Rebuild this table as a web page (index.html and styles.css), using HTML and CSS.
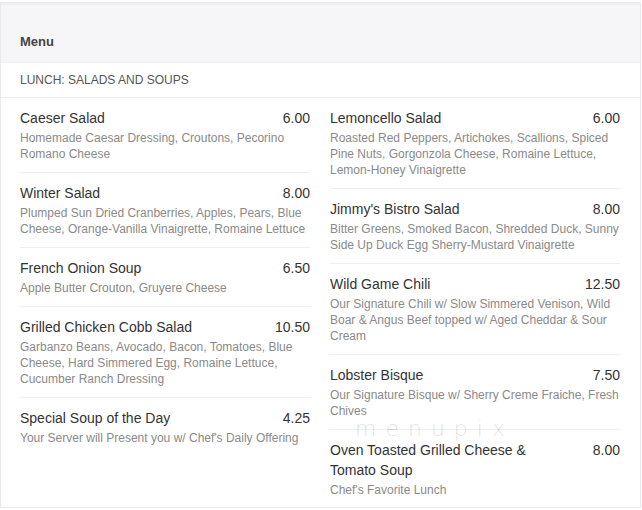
FILE: index.html
```html
<!DOCTYPE html>
<html>
<head>
<meta charset="utf-8">
<link rel="stylesheet" href="styles.css">
</head>
<body>
<div class="card">
  <div class="card-header">Menu</div>
  <div class="section-title">LUNCH: SALADS AND SOUPS</div>
  <div class="columns">
    <div class="col">
      <div class="item">
        <div class="item-head"><span>Caeser Salad</span><span class="price">6.00</span></div>
        <div class="desc">Homemade Caesar Dressing, Croutons, Pecorino Romano Cheese</div>
      </div>
      <div class="item">
        <div class="item-head"><span>Winter Salad</span><span class="price">8.00</span></div>
        <div class="desc">Plumped Sun Dried Cranberries, Apples, Pears, Blue Cheese, Orange-Vanilla Vinaigrette, Romaine Lettuce</div>
      </div>
      <div class="item">
        <div class="item-head"><span>French Onion Soup</span><span class="price">6.50</span></div>
        <div class="desc">Apple Butter Crouton, Gruyere Cheese</div>
      </div>
      <div class="item">
        <div class="item-head"><span>Grilled Chicken Cobb Salad</span><span class="price">10.50</span></div>
        <div class="desc">Garbanzo Beans, Avocado, Bacon, Tomatoes, Blue Cheese, Hard Simmered Egg, Romaine Lettuce, Cucumber Ranch Dressing</div>
      </div>
      <div class="item last">
        <div class="item-head"><span>Special Soup of the Day</span><span class="price">4.25</span></div>
        <div class="desc">Your Server will Present you w/ Chef's Daily Offering</div>
      </div>
    </div>
    <div class="col">
      <div class="item">
        <div class="item-head"><span>Lemoncello Salad</span><span class="price">6.00</span></div>
        <div class="desc">Roasted Red Peppers, Artichokes, Scallions, Spiced Pine Nuts, Gorgonzola Cheese, Romaine Lettuce, Lemon-Honey Vinaigrette</div>
      </div>
      <div class="item">
        <div class="item-head"><span>Jimmy's Bistro Salad</span><span class="price">8.00</span></div>
        <div class="desc">Bitter Greens, Smoked Bacon, Shredded Duck, Sunny Side Up Duck Egg Sherry-Mustard Vinaigrette</div>
      </div>
      <div class="item">
        <div class="item-head"><span>Wild Game Chili</span><span class="price">12.50</span></div>
        <div class="desc">Our Signature Chili w/ Slow Simmered Venison, Wild Boar &amp; Angus Beef topped w/ Aged Cheddar &amp; Sour Cream</div>
      </div>
      <div class="item">
        <div class="item-head"><span>Lobster Bisque</span><span class="price">7.50</span></div>
        <div class="desc">Our Signature Bisque w/ Sherry Creme Fraiche, Fresh Chives</div>
      </div>
      <div class="item last">
        <div class="item-head"><span class="name-wrap">Oven Toasted Grilled Cheese &amp; Tomato Soup</span><span class="price">8.00</span></div>
        <div class="desc">Chef's Favorite Lunch</div>
      </div>
    </div>
  </div>
  <div class="watermark">menupix</div>
</div>
</body>
</html>
```

FILE: styles.css
```css
html, body {
  margin: 0;
  padding: 0;
  background: #ffffff;
}

body {
  font-family: "Liberation Sans", Arial, sans-serif;
  color: #333;
}

.card {
  position: relative;
  margin-top: 2px;
  width: 639px;
  height: 504px;
  border: 1px solid #e9e9ef;
  box-sizing: content-box;
  background: #fff;
  overflow: hidden;
}

.card-header {
  background: #f6f6f9;
  border-top: 2px solid #eeeef3;
  padding: 27px 19px 10px;
  font-size: 13px;
  line-height: 20px;
  font-weight: bold;
  color: #444;
}

.section-title {
  padding: 8px 19px 8px;
  font-size: 12px;
  line-height: 18px;
  color: #555;
  border-top: 1px solid #efeff3;
  border-bottom: 1px solid #ececf0;
}

.columns {
  display: grid;
  grid-template-columns: 290px 290px;
  column-gap: 20px;
  padding: 0 19px;
}

.item {
  padding: 10px 0 10px;
  border-bottom: 1px solid #efefef;
}

.item.last {
  border-bottom: none;
}

.item-head {
  display: flex;
  justify-content: space-between;
  align-items: flex-start;
  font-size: 14px;
  line-height: 20px;
  color: #333;
}

.name-wrap {
  max-width: 210px;
}

.price {
  flex: none;
  margin-left: 12px;
}

.desc {
  margin-top: 2px;
  font-size: 12px;
  line-height: 16px;
  color: #8a8a8a;
}

.watermark {
  position: absolute;
  left: 354px;
  top: 419px;
  font-family: "DejaVu Sans ExtraLight", "DejaVu Sans", sans-serif;
  font-size: 22px;
  line-height: 14px;
  font-weight: 200;
  letter-spacing: 9px;
  color: rgba(0, 0, 0, 0.14);
  pointer-events: none;
}
```
